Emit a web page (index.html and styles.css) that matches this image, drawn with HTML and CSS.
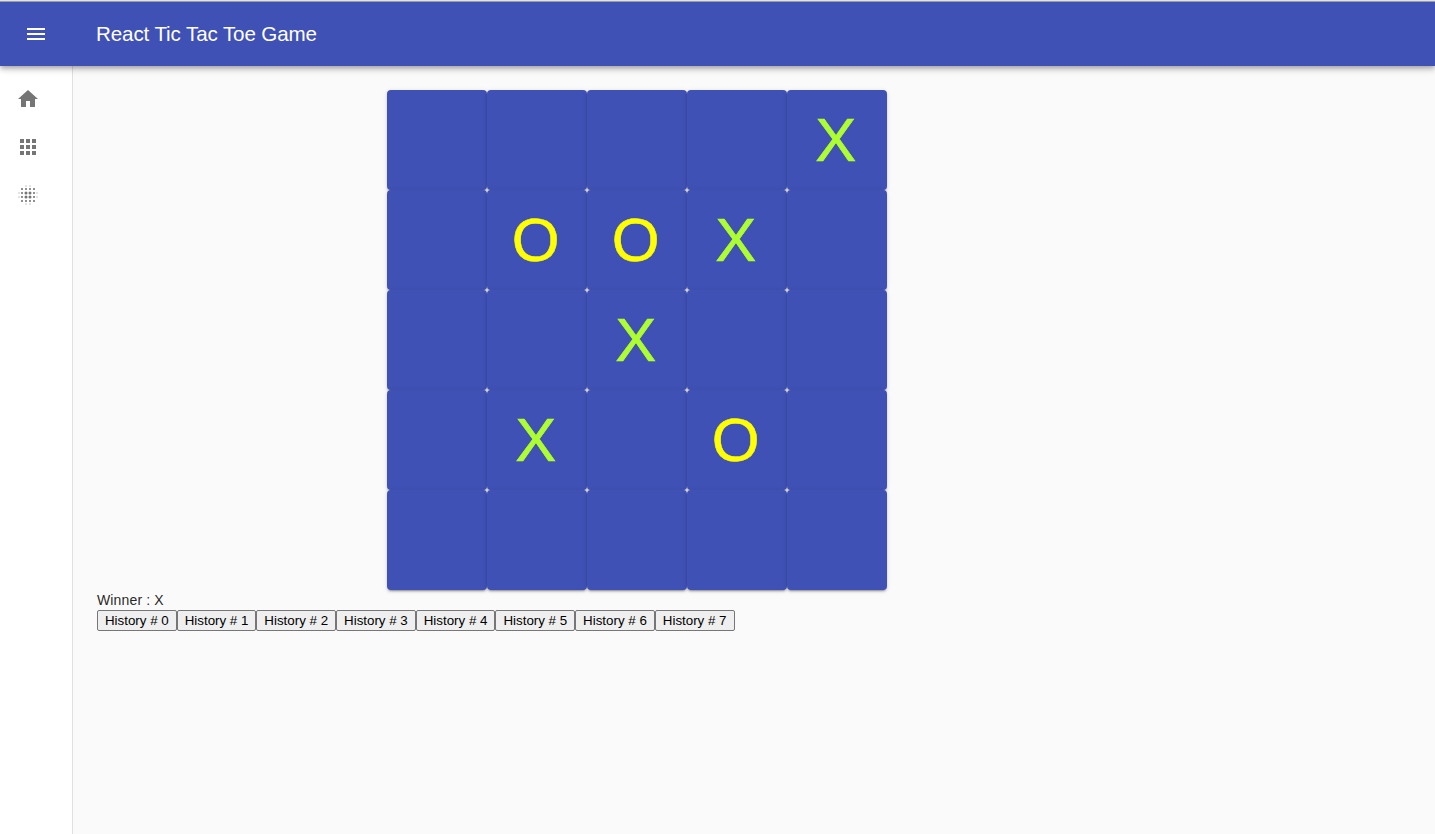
FILE: index.html
```html
<!DOCTYPE html>
<html lang="en">
<head>
<meta charset="utf-8">
<title>React Tic Tac Toe Game</title>
<link rel="stylesheet" href="styles.css">
</head>
<body>
<div class="app">
  <header class="appbar">
    <svg class="icon menu" viewBox="0 0 24 24"><path d="M3 18h18v-2H3v2zm0-5h18v-2H3v2zm0-7v2h18V6H3z"/></svg>
    <h1 class="title">React Tic Tac Toe Game</h1>
  </header>
  <div class="body">
    <nav class="drawer">
      <a class="nav-item"><svg class="icon" viewBox="0 0 24 24"><path d="M10 20v-6h4v6h5v-8h3L12 3 2 12h3v8z"/></svg></a>
      <a class="nav-item"><svg class="icon" viewBox="0 0 24 24"><path d="M4 8h4V4H4v4zm6 12h4v-4h-4v4zm-6 0h4v-4H4v4zm0-6h4v-4H4v4zm6 0h4v-4h-4v4zm6-10v4h4V4h-4zm-6 4h4V4h-4v4zm6 6h4v-4h-4v4zm0 6h4v-4h-4v4z"/></svg></a>
      <a class="nav-item"><svg class="icon" viewBox="0 0 24 24">
        <path class="dots-outer" d="M9 2h2v2H9zM13 2h2v2h-2zM9 20h2v2H9zM13 20h2v2h-2zM2 9h2v2H2zM2 13h2v2H2zM20 9h2v2h-2zM20 13h2v2h-2z"/>
        <path class="dots-mid" d="M5 5h2v2H5zM9 5h2v2H9zM13 5h2v2h-2zM17 5h2v2h-2zM5 9h2v2H5zM17 9h2v2h-2zM5 13h2v2H5zM17 13h2v2h-2zM5 17h2v2H5zM9 17h2v2H9zM13 17h2v2h-2zM17 17h2v2h-2z"/>
        <circle cx="10" cy="10" r="1.5"/><circle cx="14" cy="10" r="1.5"/><circle cx="10" cy="14" r="1.5"/><circle cx="14" cy="14" r="1.5"/>
      </svg></a>
    </nav>
    <main class="content">
      <div class="board">
        <div class="cell"></div><div class="cell"></div><div class="cell"></div><div class="cell"></div><div class="cell x">X</div>
        <div class="cell"></div><div class="cell o">O</div><div class="cell o">O</div><div class="cell x">X</div><div class="cell"></div>
        <div class="cell"></div><div class="cell"></div><div class="cell x">X</div><div class="cell"></div><div class="cell"></div>
        <div class="cell"></div><div class="cell x">X</div><div class="cell"></div><div class="cell o">O</div><div class="cell"></div>
        <div class="cell"></div><div class="cell"></div><div class="cell"></div><div class="cell"></div><div class="cell"></div>
      </div>
      <div class="status">Winner : X</div>
      <div class="history">
        <button class="step">History # 0</button><button class="step">History # 1</button><button class="step">History # 2</button><button class="step">History # 3</button><button class="step">History # 4</button><button class="step">History # 5</button><button class="step">History # 6</button><button class="step">History # 7</button>
      </div>
    </main>
  </div>
</div>
</body>
</html>
```
FILE: styles.css
```css
* { box-sizing: border-box; }
body {
  margin: 0;
  background: #fafafa;
  color: rgba(0, 0, 0, 0.87);
  font: 400 14px/20px "Liberation Sans", Arial, sans-serif;
}
.app {
  display: flex;
  flex-direction: column;
  height: 100vh;
  overflow: hidden;
  border-top: 1px solid #dee1e6;
}
.appbar {
  position: relative;
  z-index: 1;
  flex: none;
  display: flex;
  align-items: center;
  height: 65px;
  padding: 0 24px;
  border-top: 1px solid #9b9da3;
  background: #3f51b5;
  color: #fff;
  box-shadow: 0 2px 4px -1px rgba(0, 0, 0, 0.2), 0 4px 5px 0 rgba(0, 0, 0, 0.14), 0 1px 10px 0 rgba(0, 0, 0, 0.12);
}
.icon {
  display: block;
  width: 24px;
  height: 24px;
  fill: currentColor;
}
.dots-outer { opacity: 0.2; }
.dots-mid { opacity: 0.8; }
.menu { margin-right: 48px; }
.title {
  margin: 0;
  font-size: 20.6px;
  font-weight: 400;
  line-height: 32px;
  letter-spacing: -0.12px;
}
.body {
  flex: 1;
  display: flex;
}
.drawer {
  width: 73px;
  padding-top: 9px;
  border-right: 1px solid #e0e0e0;
  background: #fff;
  color: #757575;
}
.nav-item {
  display: flex;
  align-items: center;
  height: 48px;
  padding-left: 16px;
}
.content {
  flex: 1;
  padding: 24px;
}
.board {
  display: grid;
  grid-template-columns: repeat(5, 100px);
  grid-auto-rows: 100px;
  margin-left: 290px;
}
.cell {
  padding-right: 3px;
  border-radius: 4px;
  background: #3f51b5;
  box-shadow: 0 3px 1px -2px rgba(0, 0, 0, 0.2), 0 2px 2px 0 rgba(0, 0, 0, 0.14), 0 1px 5px 0 rgba(0, 0, 0, 0.12);
  font-size: 61.5px;
  line-height: 100px;
  letter-spacing: -0.5px;
  text-align: center;
  -webkit-text-stroke: 0.6px currentColor;
}
.x { color: #adff2f; }
.o { color: #ff0; }
.status { letter-spacing: 0.15px; }
.history { display: flex; }
.step {
  width: 79.69px;
  height: 21px;
  padding: 0;
  border: 1px solid #767676;
  border-radius: 2px;
  background: #efefef;
  color: #000;
  font: 13.333px/19px "Liberation Sans", Arial, sans-serif;
  white-space: nowrap;
}
```
